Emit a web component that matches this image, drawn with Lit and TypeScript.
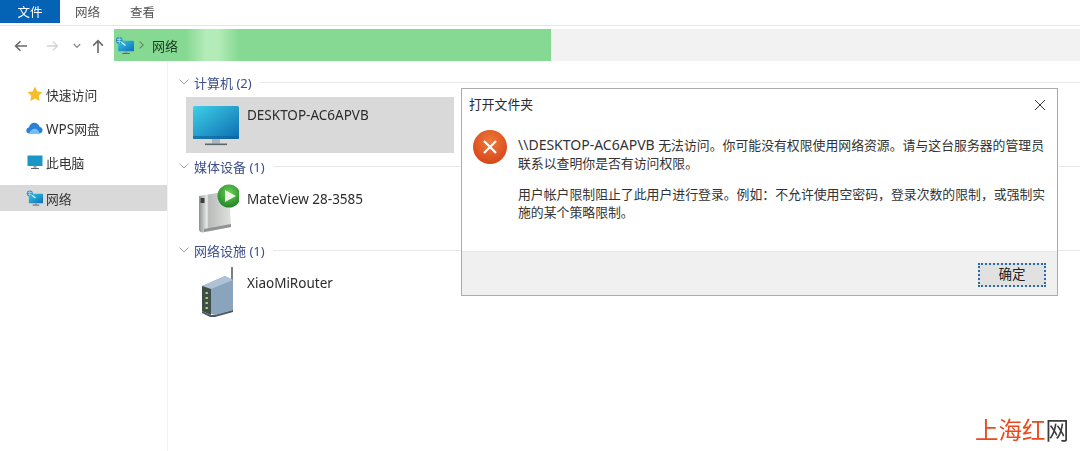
import { LitElement, html, css } from "lit";
import { customElement } from "lit/decorators.js";

const netIcon = (w: number, h: number) => html`<svg width=${w} height=${h} viewBox="0 0 18 18">
  <defs><linearGradient id="ns" x1="0" y1="0" x2="1" y2="1"><stop offset="0" stop-color="#35c6e8"/><stop offset="1" stop-color="#0f6fb4"/></linearGradient></defs>
  <rect x="3" y="4.5" width="15" height="10" rx=".6" fill="url(#ns)"/>
  <rect x="9.2" y="14.5" width="2.4" height="1.6" fill="#8fa3ad"/><rect x="7" y="16" width="7" height="1" fill="#55626a"/>
  <circle cx="4" cy="4.2" r="3.2" fill="#2e8fc4"/><path d="M1.8 3.2h4.4M1.8 5.2h4.4M4 1.2v6" stroke="#bfe9f5" stroke-width=".7" fill="none"/>
  <path d="M6 6l4 3" stroke="#e8f7fb" stroke-width="1.1"/>
</svg>`;

const monitor = html`<svg class="mon" width="46" height="46" viewBox="0 0 46 46">
  <defs><linearGradient id="mg" x1="0" y1="0" x2="1" y2="1"><stop offset="0" stop-color="#3fd0e6"/><stop offset="1" stop-color="#0c6cb2"/></linearGradient></defs>
  <rect x="0" y="0" width="46" height="33" rx="1.5" fill="url(#mg)"/>
  <rect x="0" y="30" width="46" height="3" fill="#0f5f9a" opacity=".6"/>
  <rect x="19" y="33" width="8" height="4.5" fill="#a9b6bc"/>
  <rect x="12" y="37.5" width="22" height="1.6" fill="#5b666c"/>
</svg>`;

const media = html`<svg class="dev" width="46" height="54" viewBox="0 0 46 54">
  <defs>
    <linearGradient id="bx" x1="0" y1="0" x2="1" y2="0"><stop offset="0" stop-color="#8d9290"/><stop offset=".25" stop-color="#e9ecea"/><stop offset=".3" stop-color="#b9bcba"/><stop offset="1" stop-color="#dfe1df"/></linearGradient>
    <radialGradient id="pl" cx=".5" cy=".35" r=".7"><stop offset="0" stop-color="#6bcf57"/><stop offset="1" stop-color="#1c7f22"/></radialGradient>
  </defs>
  <path d="M6 15l30-5 2 36-28 5.5c-2 .2-4-1-4-3z" fill="url(#bx)"/>
  <path d="M11 48l27-5v3l-27 5z" fill="#8f9392"/>
  <rect x="7.5" y="17" width="4" height="5" fill="#3b3f3e"/>
  <circle cx="36" cy="15" r="11.5" fill="url(#pl)"/>
  <path d="M32 9l11 6-11 6z" fill="#eef6e6"/>
</svg>`;

const router = html`<svg class="dev" width="46" height="52" viewBox="0 0 46 52">
  <path d="M39 2v14" stroke="#3d4a55" stroke-width="1.4"/>
  <path d="M9 21l23-10 8 4v30l-18 5-13-4z" fill="#8aa4bc"/>
  <path d="M9 21l23-10 8 4-22 9z" fill="#aec3d5"/>
  <path d="M9 21l9 3v26l-9-4z" fill="#3f4f46"/>
  <g fill="#9fcf8a"><rect x="12.5" y="27" width="2.4" height="2"/><rect x="12.5" y="32" width="2.4" height="2"/><rect x="12.5" y="37" width="2.4" height="2"/><rect x="12.5" y="42" width="2.4" height="2"/></g>
  <path d="M9 46l9 4 4 0 18-5v2l-18 5h-5l-8-4z" fill="#4b5864"/>
</svg>`;

const chevronDown = html`<svg class="chev" width="10" height="6" viewBox="0 0 10 6"><path d="M.5.5L5 5 9.5.5" fill="none" stroke="#a6a6a6" stroke-width="1"/></svg>`;

@customElement("app-root")
export class AppRoot extends LitElement {
  static styles = css`
    :host { display: block; position: relative; width: 1080px; height: 451px; overflow: hidden; background: #fff;
      font-family: "Noto Sans", "Noto Sans CJK SC", sans-serif; font-size: 13px; color: #222; }
    .cjk { font-family: "Noto Sans CJK SC", sans-serif; }
    .blur { filter: blur(.45px); }
    .tabs { display: flex; height: 23px; border-bottom: 1px solid #e6e6e6; padding-bottom: 2px; }
    .tab { width: 55px; display: flex; align-items: center; justify-content: center; color: #555; font-size: 12.5px; margin-top: -1px; }
    .tab.file { width: 60px; background: #0563b5; color: #fff; margin-top: 0; }
    .nav { display: flex; height: 32px; margin-top: 3px; }
    .arrows { width: 114px; display: flex; align-items: center; flex: none; padding: 2px 0 0 14px; box-sizing: border-box; }
    .arrows svg { display: block; }
    .fwd { margin-left: 19px; }
    .dn { margin-left: 14px; }
    .up { margin-left: 11px; }
    .addr { flex: 1; display: flex; background: #f2f2f2; }
    .green { width: 437px; height: 32px; display: flex; align-items: center; padding-left: 1px; box-sizing: border-box;
      background: linear-gradient(90deg, #86d993 0, #86d993 72px, #b4ecb9 92px, #b4ecb9 104px, #86d993 125px); color: #173a1e; gap: 6px; }
    .sep { margin-left: -1px; }
    .crumb { font-size: 13px; margin-left: 2px; }
    .body { display: flex; }
    .side { width: 168px; flex: none; box-sizing: border-box; height: 390px; border-right: 1px solid #f2f2f2; padding-top: 16px; display: flex; flex-direction: column; }
    .sitem { height: 34px; display: flex; align-items: center; padding-left: 26px; gap: 3px; color: #333; font-size: 12.8px; box-sizing: border-box; flex: none; }
    .lat { font-size: 13.5px; }
    .sitem.sel { background: #d9d9d9; height: 26px; margin-top: 6px; }
    .ic { width: 17px; height: 18px; display: flex; align-items: center; justify-content: center; flex: none; }
    .main { flex: 1; padding: 10px 0 0 11px; display: flex; flex-direction: column; }
    .group { height: 84px; display: flex; flex-direction: column; flex: none; }
    .ghead { height: 22px; display: flex; align-items: center; gap: 5px; color: #3c4f8c; font-size: 13px; flex: none; }
    .ghead .line { flex: 1; height: 1px; background: #e8e8e8; margin-left: 3px; }
    .gitem { margin: 4px 0 0 7px; width: 268px; height: 56px; display: flex; padding-left: 7px; box-sizing: border-box; gap: 8px; flex: none; }
    .gitem.sel { background: #d9d9d9; }
    .gitem svg { flex: none; }
    .mon { margin-top: 9px; }
    .gitem .name { font-size: 13.5px; color: #2c2c2c; margin-top: 9px; line-height: 18px; }
    .dialog { position: absolute; left: 461px; top: 88px; width: 597px; height: 208px; box-sizing: border-box; background: #fff;
      border: 1px solid #ababab; display: flex; flex-direction: column; }
    .dhead { height: 31px; display: flex; align-items: center; justify-content: space-between; padding: 0 11px 0 7px; flex: none; font-size: 12.8px; color: #2a2a2a; }
    .dhead span { margin-top: -2px; }
    .dbody { flex: 1; display: flex; padding: 9px 0 0 11px; gap: 11px; }
    .err { flex: none; margin-top: 1px; }
    .msg { font-size: 12.86px; line-height: 17.5px; color: #333; width: 552px; padding-top: 7px; box-sizing: border-box; }
    .msg p { margin: 0 0 14px; white-space: nowrap; }
    .msg .lat { font-size: 14px; line-height: 0; font-family: "Noto Sans", sans-serif; }
    .dfoot { height: 44px; flex: none; background: #f0f0f0; border-top: 1px solid #e6e6e6; box-sizing: border-box; display: flex; justify-content: flex-end; align-items: center; padding: 2px 11px 0 0; }
    .btn { width: 68px; height: 24px; box-sizing: border-box; border: 2px dotted #2c6cab; background: #e1e1e1; padding-bottom: 3px;
      display: flex; align-items: center; justify-content: center; font-size: 13.5px; color: #222; }
    .wm { position: absolute; right: 11px; top: 414px; font-size: 23.5px; line-height: 30px; color: #ea4a1c; }
    .wm b { font-weight: 400; color: #3b3b3b; }
  `;

  render() {
    return html`
      <div class="blur">
      <div class="tabs cjk">
        <div class="tab file">文件</div><div class="tab">网络</div><div class="tab">查看</div>
      </div>
      <div class="nav">
        <div class="arrows">
          <svg width="14" height="12" viewBox="0 0 14 12"><path d="M13 6H2M6.5 1.2L1.6 6l4.9 4.8" fill="none" stroke="#6a6a6a" stroke-width="1.6"/></svg>
          <svg class="fwd" width="12" height="12" viewBox="0 0 12 12"><path d="M0 6h10M6 1.8L10.4 6 6 10.2" fill="none" stroke="#d4d4d4" stroke-width="1.4"/></svg>
          <svg class="dn" width="8" height="6" viewBox="0 0 8 6"><path d="M.8 1L4 4.4 7.2 1" fill="none" stroke="#8a8a8a" stroke-width="1.3"/></svg>
          <svg class="up" width="12" height="14" viewBox="0 0 12 14"><path d="M6 14V2M1.2 6.6L6 1.6l4.8 5" fill="none" stroke="#6a6a6a" stroke-width="1.6"/></svg>
        </div>
        <div class="addr"><div class="green">
          ${netIcon(19, 19)}
          <svg class="sep" width="5" height="8" viewBox="0 0 5 8"><path d="M.8.6L4.2 4 .8 7.4" fill="none" stroke="#5c8a66" stroke-width="1.1"/></svg>
          <span class="crumb cjk">网络</span>
        </div></div>
      </div>
      <div class="body">
        <div class="side">
          <div class="sitem"><span class="ic"><svg width="16" height="16" viewBox="0 0 16 16"><path d="M8 .6l2.3 4.9 5.2.6-3.8 3.6 1 5.3L8 12.4 3.3 15l1-5.3L.5 6.1l5.2-.6z" fill="#f6bd2b"/></svg></span><span class="cjk">快速访问</span></div>
          <div class="sitem"><span class="ic"><svg width="17" height="12" viewBox="0 0 17 12"><path d="M3.5 11.5C1.5 11.5.3 10 .3 8.4c0-1.6 1.1-2.8 2.6-3C3.6 2.6 5.8.8 8.3.8c2.6 0 4.6 1.7 5.2 3.9 1.8.3 3.1 1.7 3.1 3.4 0 1.9-1.5 3.4-3.4 3.4z" fill="#2a7fd6"/><path d="M3 11.5c1-3 3.5-5 6.5-4.7 2 .2 3.5 2 4.2 4.7z" fill="#6ec1f0"/></svg></span><span><span class="lat">WPS</span><span class="cjk">网盘</span></span></div>
          <div class="sitem"><span class="ic"><svg width="16" height="15" viewBox="0 0 16 15"><rect x=".5" y=".5" width="15" height="10.5" fill="#1a97c7"/><rect x="6.5" y="11" width="3" height="2" fill="#9aa9b0"/><rect x="4" y="13" width="8" height="1" fill="#5b666c"/></svg></span><span class="cjk">此电脑</span></div>
          <div class="sitem sel"><span class="ic">${netIcon(18, 18)}</span><span class="cjk">网络</span></div>
        </div>
        <div class="main">
          <div class="group">
            <div class="ghead">${chevronDown}<span>计算机 (2)</span><span class="line"></span></div>
            <div class="gitem sel">${monitor}<div class="name">DESKTOP-AC6APVB</div></div>
          </div>
          <div class="group">
            <div class="ghead">${chevronDown}<span>媒体设备 (1)</span><span class="line"></span></div>
            <div class="gitem">${media}<div class="name">MateView 28-3585</div></div>
          </div>
          <div class="group">
            <div class="ghead">${chevronDown}<span>网络设施 (1)</span><span class="line"></span></div>
            <div class="gitem">${router}<div class="name">XiaoMiRouter</div></div>
          </div>
        </div>
      </div>
      <div class="dialog">
        <div class="dhead"><span class="cjk">打开文件夹</span>
          <svg width="12" height="12" viewBox="0 0 12 12"><path d="M1 1l10 10M11 1L1 11" stroke="#333" stroke-width="1" fill="none"/></svg>
        </div>
        <div class="dbody">
          <svg class="err" width="34" height="34" viewBox="0 0 34 34">
            <defs><radialGradient id="eg" cx=".5" cy=".35" r=".75"><stop offset="0" stop-color="#ef7a3c"/><stop offset="1" stop-color="#d23f14"/></radialGradient></defs>
            <circle cx="17" cy="17" r="17" fill="url(#eg)"/>
            <path d="M11 11l12 12M23 11L11 23" stroke="#fff" stroke-width="2.2" fill="none"/>
          </svg>
          <div class="msg cjk">
            <p><span class="lat">\\\\DESKTOP-AC6APVB </span>无法访问。你可能没有权限使用网络资源。请与这台服务器的管理员<br>联系以查明你是否有访问权限。</p>
            <p>用户帐户限制阻止了此用户进行登录。例如：不允许使用空密码，登录次数的限制，或强制实<br>施的某个策略限制。</p>
          </div>
        </div>
        <div class="dfoot"><div class="btn cjk">确定</div></div>
      </div>
      </div>
      <div class="wm cjk">上海红<b>网</b></div>
    `;
  }
}
